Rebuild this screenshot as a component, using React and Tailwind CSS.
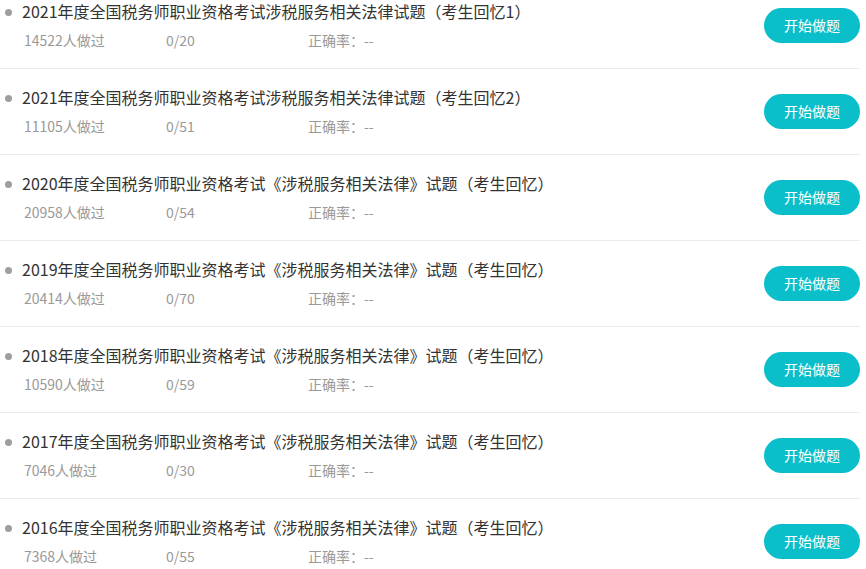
import React from "react";

const rows = [
  { title: "2021年度全国税务师职业资格考试涉税服务相关法律试题（考生回忆1）", people: "14522", total: 20 },
  { title: "2021年度全国税务师职业资格考试涉税服务相关法律试题（考生回忆2）", people: "11105", total: 51 },
  { title: "2020年度全国税务师职业资格考试《涉税服务相关法律》试题（考生回忆）", people: "20958", total: 54 },
  { title: "2019年度全国税务师职业资格考试《涉税服务相关法律》试题（考生回忆）", people: "20414", total: 70 },
  { title: "2018年度全国税务师职业资格考试《涉税服务相关法律》试题（考生回忆）", people: "10590", total: 59 },
  { title: "2017年度全国税务师职业资格考试《涉税服务相关法律》试题（考生回忆）", people: "7046", total: 30 },
  { title: "2016年度全国税务师职业资格考试《涉税服务相关法律》试题（考生回忆）", people: "7368", total: 55 },
];

export default function App() {
  return (
    <div
      className="w-[866px] h-[569px] overflow-hidden bg-white"
      style={{ fontFamily: '"Noto Sans CJK SC", "Noto Sans", sans-serif' }}
    >
      <div className="w-[860px] -mt-[17px]">
        {rows.map((r, i) => (
          <div
            key={i}
            className="flex items-center justify-between border-b border-[#ebebeb] py-[17px]"
          >
            <div className="flex flex-col">
              <div className="flex items-center h-[24px]">
                <span className="ml-[5px] mr-[10px] w-[7px] h-[7px] shrink-0 rounded-full bg-[#9e9e9e]" />
                <span className="text-[16px] leading-[22px] pb-[2px] text-[#333]">{r.title}</span>
              </div>
              <div className="mt-[7px] flex h-[20px] items-start pl-[24px] text-[14px] leading-[18px] text-[#999]">
                <span className="w-[142px]">{r.people}人做过</span>
                <span className="w-[142px]">0/{r.total}</span>
                <span>正确率：--</span>
              </div>
            </div>
            <button className="w-[96px] h-[35px] rounded-full bg-[#0bbfca] text-white text-[14px] leading-none pb-[1px]">
              开始做题
            </button>
          </div>
        ))}
      </div>
    </div>
  );
}
